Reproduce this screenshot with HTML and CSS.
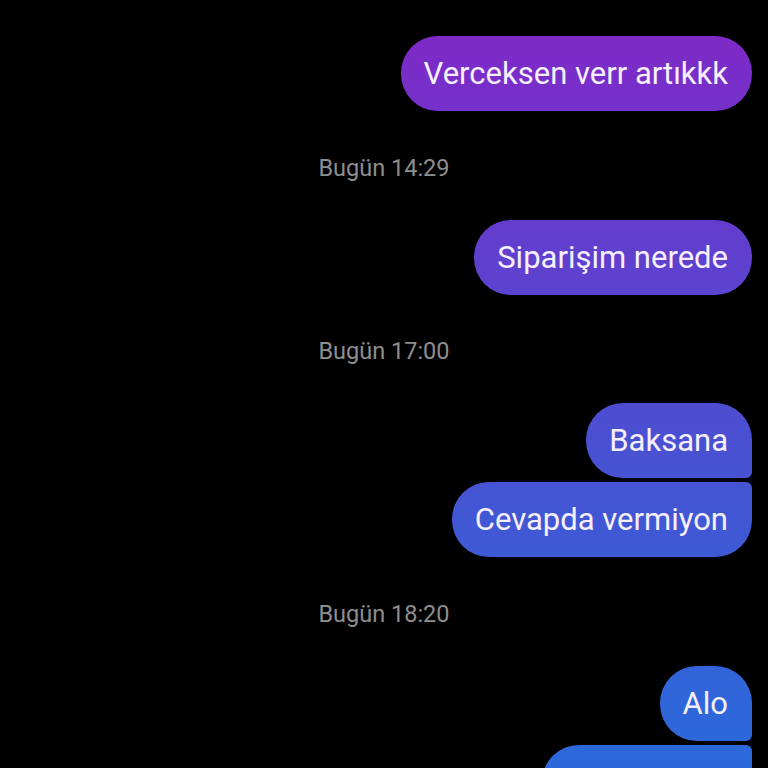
FILE: index.html
```html
<!DOCTYPE html>
<html lang="tr">
<head>
    <meta charset="UTF-8">
    <meta name="viewport" content="width=device-width, initial-scale=1.0">
    <title>Sohbet</title>
    <link rel="stylesheet" href="styles.css">
</head>
<body>
    <div class="thread">
        <div class="row">
            <div class="bubble">Verceksen verr artıkkk</div>
        </div>

        <div class="stamp">Bugün 14:29</div>

        <div class="row">
            <div class="bubble">Siparişim nerede</div>
        </div>

        <div class="stamp">Bugün 17:00</div>

        <div class="group">
            <div class="bubble first">Baksana</div>
            <div class="bubble last">Cevapda vermiyon</div>
        </div>

        <div class="stamp">Bugün 18:20</div>

        <div class="group">
            <div class="bubble first">Alo</div>
            <div class="bubble last">Neredesiniz</div>
        </div>
    </div>
</body>
</html>
```

FILE: styles.css
```css
html, body {
    margin: 0;
    padding: 0;
    background: #000;
    height: 768px;
    overflow: hidden;
}

body {
    font-family: Roboto, "Noto Sans", sans-serif;
}

.thread {
    display: flex;
    flex-direction: column;
    padding: 36px 16px 0 16px;
}

.row, .group {
    display: flex;
    flex-direction: column;
    align-items: flex-end;
}

.group {
    gap: 4px;
}

.bubble {
    height: 75px;
    box-sizing: border-box;
    display: flex;
    align-items: center;
    padding: 0 24px 0 23px;
    border-radius: 37px;
    font-size: 31px;
    color: #f6effd;
    background: linear-gradient(to bottom, #8527c6 0px, #7a2dc8 70px, #5f40cf 260px, #4a50d2 440px, #2f66d9 700px, #2b69da 768px) fixed;
}

.bubble.first {
    border-bottom-right-radius: 6px;
}

.bubble.last {
    border-top-right-radius: 6px;
}

.stamp {
    height: 108.5px;
    box-sizing: border-box;
    padding-top: 5px;
    display: flex;
    align-items: center;
    justify-content: center;
    font-size: 23.5px;
    color: #8e8e8e;
}
```
